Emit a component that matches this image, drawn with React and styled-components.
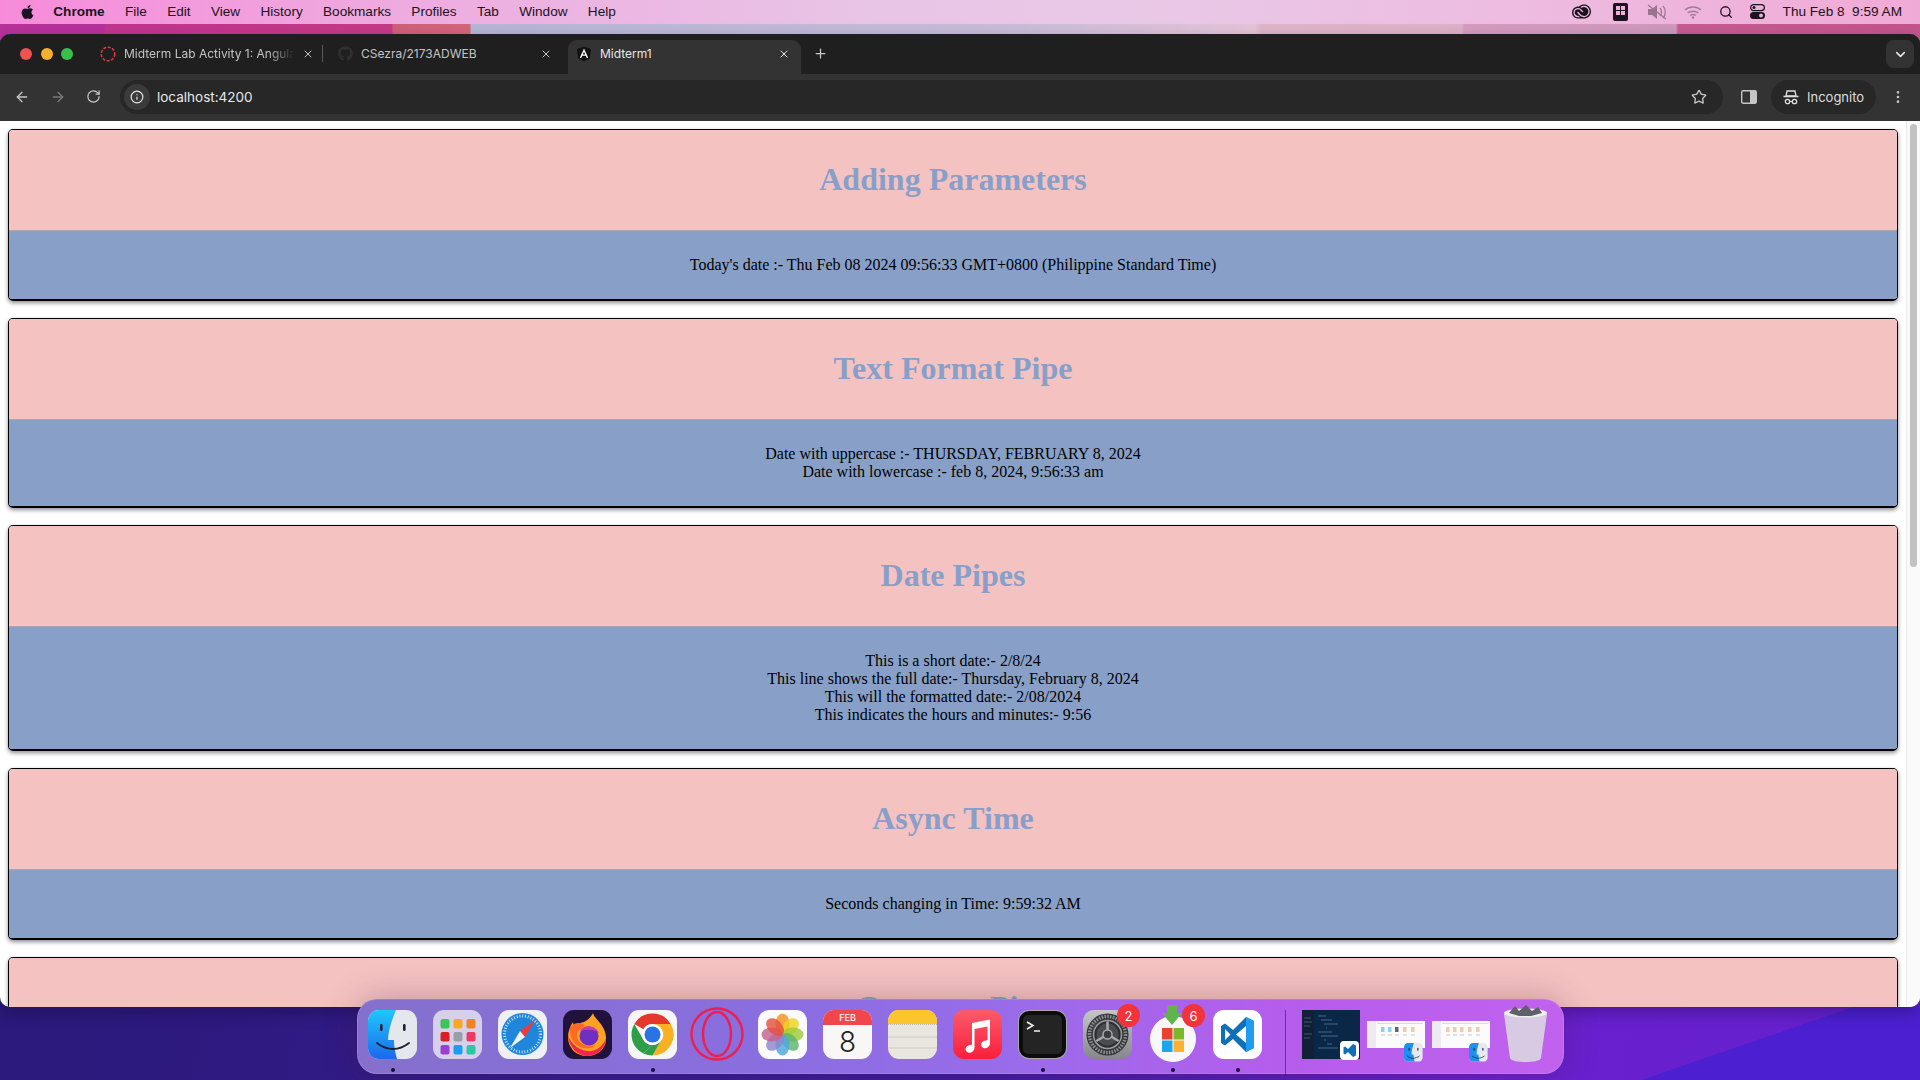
import React from 'react';
import styled, { createGlobalStyle } from 'styled-components';
import { ArrowLeft, ArrowRight, RotateCw, Info, Star, MoreVertical, X, Plus, ChevronDown, Search } from 'lucide-react';
import { FaApple, FaGithub } from 'react-icons/fa';
import { SiAdobecreativecloud } from 'react-icons/si';

const GlobalStyle = createGlobalStyle`
  html, body { margin: 0; padding: 0; height: 100%; overflow: hidden; }
  * { box-sizing: border-box; }
`;

const Desktop = styled.div`
  position: relative;
  width: 1920px;
  height: 1080px;
  overflow: hidden;
  display: flex;
  flex-direction: column;
  background:
    linear-gradient(90deg, #b8329c 0, #b8329c 104px, #c23590 105px, #c63a86 392px, #d0607a 393px, #d4667a 470px, #b6b6d6 471px, #c8bcd8 1000px, #e4c4d8 1255px, #dfb5c8 1262px, #deb2c8 1462px, #d59cbf 1464px, #cf98bd 1676px, #c65c92 1678px, #c4558c 100%) top / 100% 40px no-repeat,
    linear-gradient(161deg, transparent 52.8%, #4c20d0 53%) right bottom / 380px 73px no-repeat,
    linear-gradient(100deg, #2a1a78 0%, #2e1a80 20%, #3f1ca0 55%, #6a20d0 80%, #6420cc 100%);
`;

const MenuBar = styled.div`
  height: 24px;
  flex: none;
  display: flex;
  align-items: center;
  justify-content: space-between;
  padding: 0 18px 1px 20px;
  background: linear-gradient(90deg, #f78bd9 0%, #eeaadf 20%, #e8c4e6 45%, #e9c8e6 60%, #edbbdf 80%, #f0aad6 100%);
  font-family: "Liberation Sans", Arial, sans-serif;
  font-size: 13.6px;
  color: #1b1320;
`;

const MenuGroup = styled.div`
  display: flex;
  align-items: center;
  gap: 20.3px;
`;

const MenuItem = styled.span`
  font-weight: ${(p) => (p.$bold ? 700 : 400)};
`;

const AppleMark = styled(FaApple)`
  width: 15px;
  height: 16px;
  margin-right: -2px;
`;

const StatusGroup = styled.div`
  display: flex;
  align-items: center;
`;

const StatusSlot = styled.span`
  width: ${(p) => p.$w}px;
  height: 20px;
  flex: none;
  display: flex;
  align-items: center;
  justify-content: center;
  opacity: ${(p) => p.$dim || 1};
`;

const Clock = styled.span`
  margin-left: 2px;
  white-space: pre;
`;

const Window = styled.div`
  margin-top: 10px;
  height: 973px;
  flex: none;
  display: flex;
  flex-direction: column;
  border-radius: 10px;
  overflow: hidden;
  background: #1f1f1f;
  box-shadow: inset 0 1px 0 #6a6a6a, 0 6px 16px rgba(10, 0, 40, 0.3);
`;

const TabStrip = styled.div`
  height: 40px;
  flex: none;
  padding: 6px 6px 0 0;
  display: flex;
  align-items: stretch;
  background: #1f1f1f;
  font-family: Inter, "Liberation Sans", sans-serif;
  font-size: 12px;
`;

const Lights = styled.div`
  width: 92px;
  flex: none;
  display: flex;
  align-items: center;
  gap: 8.5px;
  padding: 0 0 6px 20px;
`;

const Light = styled.span`
  width: 12px;
  height: 12px;
  border-radius: 50%;
  background: ${(p) => p.$color};
`;

const Tab = styled.div`
  position: relative;
  width: 233px;
  margin-right: 5px;
  flex: none;
  display: flex;
  align-items: center;
  gap: 8px;
  padding: 0 11px 7px 8px;
  color: ${(p) => (p.$active ? '#e6e6e6' : '#c4c4c4')};
  background: ${(p) => (p.$active ? '#333333' : 'transparent')};
  border-radius: ${(p) => (p.$active ? '9px 9px 0 0' : '0')};
`;

const TabTitle = styled.span`
  flex: 1;
  white-space: nowrap;
  overflow: hidden;
  mask-image: ${(p) => (p.$fade ? 'linear-gradient(90deg, #000 85%, transparent)' : 'none')};
`;

const TabDivider = styled.span`
  position: absolute;
  right: 2px;
  top: 5px;
  height: 17px;
  width: 1px;
  background: #5a5a5a;
`;

const NewTab = styled(Plus)`
  width: 15px;
  height: 15px;
  color: #c8c8c8;
  margin: 6px 0 0 7px;
`;

const TabMenu = styled.div`
  margin-left: auto;
  width: 28px;
  height: 28px;
  border-radius: 8px;
  background: #333333;
  display: flex;
  align-items: center;
  justify-content: center;
  color: #e6e6e6;
`;

const Toolbar = styled.div`
  height: 47px;
  flex: none;
  display: flex;
  align-items: center;
  padding: 0 14px 1px 14px;
  background: #333333;
  color: #c6c6c6;
`;

const NavButton = styled.span`
  width: 16px;
  height: 16px;
  margin-right: 20px;
  display: flex;
  color: ${(p) => (p.$off ? '#7a7a7a' : '#c6c6c6')};
`;

const Omnibox = styled.div`
  width: 1603px;
  height: 34px;
  margin-left: -2px;
  border-radius: 17px;
  background: #272727;
  display: flex;
  align-items: center;
  padding: 0 16px 0 4px;
  font-family: Inter, "Liberation Sans", sans-serif;
  font-size: 13.5px;
  color: #e8e8e8;
`;

const InfoChip = styled.span`
  width: 26px;
  height: 26px;
  border-radius: 50%;
  background: #3b3b3b;
  display: flex;
  align-items: center;
  justify-content: center;
  margin-right: 7px;
`;

const Address = styled.span`
  flex: 1;
`;

const PanelIcon = styled.svg`
  width: 16px;
  height: 16px;
  margin-left: 18px;
  flex: none;
`;

const Incognito = styled.div`
  width: 105px;
  height: 34px;
  margin-left: 14px;
  flex: none;
  border-radius: 17px;
  background: #272727;
  display: flex;
  align-items: center;
  gap: 8px;
  padding-left: 12px;
  font-family: Inter, "Liberation Sans", sans-serif;
  font-size: 13px;
  color: #dedede;
`;

const MoreButton = styled.span`
  display: flex;
  margin-left: 14px;
`;

const PageFrame = styled.div`
  flex: 1;
  min-height: 0;
  display: flex;
  background: #ffffff;
`;

const Page = styled.div`
  flex: 1;
  min-width: 0;
  padding: 8px 8px 0;
  overflow: hidden;
`;

const ScrollTrack = styled.div`
  width: 14px;
  flex: none;
  padding: 3px 3px 0 3px;
  background: #fafafa;
  border-left: 1px solid #ececec;
`;

const ScrollThumb = styled.div`
  height: 443px;
  border-radius: 4px;
  background: #c2c2c2;
`;

const Card = styled.section`
  margin-bottom: 17px;
  border: 1px solid #000;
  border-bottom-width: 2px;
  border-radius: 5px;
  overflow: hidden;
  box-shadow: 0 2px 4px rgba(0, 0, 0, 0.45);
  font-family: "Liberation Serif", "Times New Roman", serif;
`;

const CardHead = styled.header`
  height: 101px;
  padding-bottom: 2px;
  display: flex;
  align-items: center;
  justify-content: center;
  background: #f5c2c2;
  border-bottom: 1px solid #a9a9ad;
`;

const CardTitle = styled.h1`
  margin: 0;
  font-size: 32px;
  font-weight: 700;
  color: #88a0c9;
`;

const CardBody = styled.div`
  padding: 25px 10px 25px;
  background: #88a0c8;
  color: #000;
  font-size: 16px;
  line-height: 18px;
  text-align: center;
`;

const Dock = styled.div`
  position: absolute;
  left: 357px;
  top: 999px;
  width: 1207px;
  height: 75px;
  padding: 11px 0 0 11px;
  display: flex;
  align-items: flex-start;
  gap: 16px;
  border-radius: 20px;
  background: linear-gradient(90deg, #8470cc 0%, #8a6ee0 35%, #9a6bea 55%, #b65cec 78%, #c062ee 100%);
  box-shadow: 0 0 34px rgba(60, 20, 40, 0.28), inset 0 0 0 1px rgba(255, 255, 255, 0.12);
`;

const DockItem = styled.div`
  position: relative;
  width: ${(p) => p.$w || 49}px;
  height: 49px;
  flex: none;
`;

const Drawing = styled.svg`
  display: block;
  width: ${(p) => p.$w || 49}px;
  height: 49px;
  overflow: visible;
`;

const RunDot = styled.span`
  position: absolute;
  left: 22.5px;
  top: 58px;
  width: 4px;
  height: 4px;
  border-radius: 50%;
  background: #14103c;
`;

const Badge = styled.span`
  position: absolute;
  right: -8px;
  top: -6px;
  width: 23px;
  height: 23px;
  border-radius: 50%;
  background: #f2333b;
  color: #fff;
  display: flex;
  align-items: center;
  justify-content: center;
  font-family: Inter, "Liberation Sans", sans-serif;
  font-size: 13px;
  z-index: 1;
`;

const DockDivider = styled.span`
  width: 1px;
  height: 66px;
  flex: none;
  margin-left: 7px;
  background: rgba(40, 20, 70, 0.55);
`;

const DocGroup = styled.div`
  display: flex;
  gap: 7px;
`;

const TrashItem = styled(DockItem)`
  margin-left: 4px;
`;

const cards = [
  { title: 'Adding Parameters', lines: ["Today's date :- Thu Feb 08 2024 09:56:33 GMT+0800 (Philippine Standard Time)"] },
  { title: 'Text Format Pipe', lines: ['Date with uppercase :- THURSDAY, FEBRUARY 8, 2024', 'Date with lowercase :- feb 8, 2024, 9:56:33 am'] },
  {
    title: 'Date Pipes',
    lines: [
      'This is a short date:- 2/8/24',
      'This line shows the full date:- Thursday, February 8, 2024',
      'This will the formatted date:- 2/08/2024',
      'This indicates the hours and minutes:- 9:56'
    ]
  },
  { title: 'Async Time', lines: ['Seconds changing in Time: 9:59:32 AM'] },
  { title: 'Common Pipe', lines: ['Common pipes'] }
];

const menus = ['File', 'Edit', 'View', 'History', 'Bookmarks', 'Profiles', 'Tab', 'Window', 'Help'];

const MiniFinder = ({ x, y, s }) => (
  <g transform={`translate(${x} ${y}) scale(${s})`}>
    <rect width="49" height="49" rx="11" fill="#e6eaee" />
    <path d="M11 0H26C22 12 20 22 20 30H25C25 36 26 43 28 49H11A11 11 0 0 1 0 38V11A11 11 0 0 1 11 0Z" fill="#1f8ff0" />
    <path d="M8 34C18 42 30 42 41 34" fill="none" stroke="#1b2a40" strokeWidth="2" />
    <rect x="12" y="13" width="3" height="7" fill="#1b2a40" />
    <rect x="35" y="13" width="3" height="7" fill="#1b2a40" />
  </g>
);

const FinderWindow = ({ dark }) => (
  <Drawing $w={58} viewBox="0 0 58 49">
    <rect x="0" y="11" width="58" height="27" fill="#fbfbfb" />
    <rect x="0" y="11" width="9" height="27" fill="#efe9f0" />
    <path d="M10 13.500H56" stroke="#dcdcdc" strokeWidth="1" />
    {[14, 21, 28, 36, 44].map((x, i) => (
      <rect key={x} x={x} y="17" width="3.500" height="5" opacity="0.85" fill={dark && i < 2 ? '#7cc6f0' : dark && i === 2 ? '#4a4a4a' : '#e9c4a4'} />
    ))}
    <path d="M14 25H18M21 25H25M28 25H32M36 25H40M44 25H48" stroke="#c8c8c8" strokeWidth="1" />
    <MiniFinder x={37} y={33} s={0.38} />
  </Drawing>
);

const dockApps = [
  {
    key: 'finder',
    dot: true,
    art: (
      <>
        <defs>
          <linearGradient id="fb" x1="0" y1="0" x2="0" y2="1">
            <stop offset="0" stopColor="#1ec8fb" />
            <stop offset="1" stopColor="#1c68ec" />
          </linearGradient>
        </defs>
        <rect width="49" height="49" rx="11" fill="#e4e7ec" />
        <path d="M11 0H28C23 12 20 22 20 30H26C26 36 27 43 29 49H11A11 11 0 0 1 0 38V11A11 11 0 0 1 11 0Z" fill="url(#fb)" />
        <path d="M9 33C19 41 31 41 41 33" fill="none" stroke="#182338" strokeWidth="1.800" strokeLinecap="round" />
        <rect x="12" y="14" width="2.600" height="7" rx="1.200" fill="#182338" />
        <rect x="35" y="14" width="2.600" height="7" rx="1.200" fill="#182338" />
      </>
    )
  },
  {
    key: 'launchpad',
    art: (
      <>
        <rect width="49" height="49" rx="11" fill="#d6d0ea" />
        {['#37c75a', '#f7a823', '#f08325', '#d81f26', '#9a9da4', '#ee3763', '#9a3fd0', '#1f9cf0', '#2ac9a6'].map((c, i) => (
          <rect key={c} x={7.5 + (i % 3) * 13} y={9 + Math.floor(i / 3) * 13} width="9" height="9.500" rx="2" fill={c} />
        ))}
      </>
    )
  },
  {
    key: 'safari',
    art: (
      <>
        <rect width="49" height="49" rx="11" fill="#eef0f2" />
        <circle cx="24.500" cy="24" r="21" fill="#1f86dc" />
        <circle cx="24.500" cy="24" r="18" fill="none" stroke="#d8ecfa" strokeWidth="3" strokeDasharray="0.900 1.900" />
        <path d="M37 10L27 27L22 21Z" fill="#f0393b" />
        <path d="M12 38L22 21L27 27Z" fill="#f2f2f2" />
      </>
    )
  },
  {
    key: 'firefox',
    art: (
      <>
        <rect width="49" height="49" rx="11" fill="#20123a" />
        <path d="M30 3C31 9 42 14 43 27C44 38 35 46 24 46C13 46 5 38 5 27C5 22 7 16 10 12C10 15 11 17 13 18C15 14 18 12 21 12C25 10 28 7 30 3Z" fill="#ffa21f" />
        <path d="M5 25C6 38 15 46 25 46C35 46 43 37 43 28C40 37 32 42 24 41C15 40 8 34 5 25Z" fill="#f3244f" />
        <path d="M7 18C10 13 15 12 20 14C25 16 15 19 14 24C13 33 24 39 33 34C26 43 6 38 7 18Z" fill="#ff6a22" />
        <circle cx="26" cy="26" r="9.500" fill="#6f2fc0" />
        <path d="M17 21C20 15 31 14 36 23C31 19 24 19 17 21Z" fill="#c23fb0" />
      </>
    )
  },
  {
    key: 'chrome',
    dot: true,
    art: (
      <>
        <rect width="49" height="49" rx="11" fill="#f6f6f6" />
        <path d="M24.500 3.500A21 21 0 0 1 42.700 14H24.500A10.500 10.500 0 0 0 15.400 19.200L6.300 13.900A21 21 0 0 1 24.500 3.500Z" fill="#e5372b" />
        <path d="M6.300 13.900L15.400 29.800A10.500 10.500 0 0 0 24.500 35L15.400 43.400A21 21 0 0 1 6.300 13.900Z" fill="#2f9e46" />
        <path d="M42.700 14A21 21 0 0 1 24.500 45.500L33.600 29.800A10.500 10.500 0 0 0 33.600 19.200L24.500 14Z" fill="#f9b122" />
        <path d="M15.400 43.400L24.500 35A10.500 10.500 0 0 0 33.600 29.800L24.500 45.500A21 21 0 0 1 15.400 43.400Z" fill="#2f9e46" />
        <circle cx="24.500" cy="24.500" r="10.500" fill="#ffffff" />
        <circle cx="24.500" cy="24.500" r="8" fill="#2a73e6" />
      </>
    )
  },
  {
    key: 'opera',
    art: (
      <>
        <circle cx="24" cy="24" r="25.500" fill="none" stroke="#ef1e4e" strokeWidth="2.400" />
        <ellipse cx="24" cy="24" rx="14" ry="22" fill="none" stroke="#ef1e4e" strokeWidth="2.400" />
      </>
    )
  },
  {
    key: 'photos',
    art: (
      <>
        <rect width="49" height="49" rx="11" fill="#fbfbfb" />
        {['#f6911e', '#ecd21f', '#9ccb3b', '#5db56b', '#4fa6dc', '#8e86cc', '#c3628f', '#e5503f'].map((c, i) => (
          <ellipse key={c} cx="24.500" cy="14" rx="7" ry="10.500" fill={c} opacity="0.820" transform={`rotate(${i * 45} 24.500 24.500)`} />
        ))}
      </>
    )
  },
  {
    key: 'calendar',
    art: (
      <>
        <rect width="49" height="49" rx="11" fill="#f8f7f5" />
        <path d="M11 0H38A11 11 0 0 1 49 11V15H0V11A11 11 0 0 1 11 0Z" fill="#f0474a" />
        <text x="24.500" y="11" textAnchor="middle" fontFamily="Inter, sans-serif" fontSize="9" fontWeight="600" fill="#fbe6e6">FEB</text>
        <text x="24.500" y="42" textAnchor="middle" fontFamily="Inter, sans-serif" fontSize="28" fontWeight="300" fill="#222">8</text>
      </>
    )
  },
  {
    key: 'notes',
    art: (
      <>
        <rect width="49" height="49" rx="11" fill="#e9e6df" />
        <path d="M11 0H38A11 11 0 0 1 49 11V14H0V11A11 11 0 0 1 11 0Z" fill="#fbc52c" />
        <path d="M0 14.500H49" stroke="#b9b5ab" strokeDasharray="1 1" />
        <path d="M0 27H49M0 38H49" stroke="#cfccc4" />
      </>
    )
  },
  {
    key: 'music',
    art: (
      <>
        <defs>
          <linearGradient id="mu" x1="0" y1="0" x2="0" y2="1">
            <stop offset="0" stopColor="#fb5b6c" />
            <stop offset="1" stopColor="#f91f3c" />
          </linearGradient>
        </defs>
        <rect width="49" height="49" rx="11" fill="url(#mu)" />
        <path d="M19 13L37 9.500V33C37 37 33 39 30.500 38C27 36.500 27.500 32 31 31L34.500 30V16.500L21.500 19V37.500C21.500 41.500 17.500 43.500 15 42.500C11.500 41 12 36.500 15.500 35.500L19 34.500Z" fill="#fff" />
      </>
    )
  },
  {
    key: 'terminal',
    dot: true,
    art: (
      <>
        <rect width="49" height="49" rx="11" fill="#a8a8a8" />
        <rect x="1" y="1" width="47" height="47" rx="10" fill="#0c0c0c" />
        <rect x="5" y="5" width="39" height="39" rx="5" fill="#242424" />
        <path d="M9 12L15 15.500L9 19" fill="none" stroke="#f2f2f2" strokeWidth="1.500" />
        <path d="M16 21H22" stroke="#f2f2f2" strokeWidth="1.500" />
      </>
    )
  },
  {
    key: 'settings',
    badge: '2',
    art: (
      <>
        <defs>
          <linearGradient id="se" x1="0" y1="0" x2="0" y2="1">
            <stop offset="0" stopColor="#c4c6c9" />
            <stop offset="1" stopColor="#85878b" />
          </linearGradient>
        </defs>
        <rect width="49" height="49" rx="11" fill="url(#se)" />
        <circle cx="24.500" cy="24.500" r="21" fill="#36373a" />
        <circle cx="24.500" cy="24.500" r="18" fill="none" stroke="#8f9195" strokeWidth="3.500" strokeDasharray="1.500 1.300" />
        <circle cx="24.500" cy="24.500" r="14" fill="#2e2f32" stroke="#9a9ca0" strokeWidth="1.500" />
        <circle cx="24.500" cy="24.500" r="11" fill="#4b4c50" />
        <path d="M24.500 24.500V11.500M24.500 24.500L13.300 31M24.500 24.500L35.700 31" stroke="#a6a8ac" strokeWidth="2.600" />
        <circle cx="24.500" cy="24.500" r="4.500" fill="#3a3b3e" stroke="#a6a8ac" strokeWidth="1.500" />
      </>
    )
  },
  {
    key: 'store',
    dot: true,
    badge: '6',
    art: (
      <>
        <circle cx="25" cy="29" r="23" fill="#f8f8f8" />
        <rect x="14" y="18" width="10.500" height="11.500" fill="#e8432c" />
        <rect x="25.500" y="18" width="10.500" height="11.500" fill="#7cb82a" />
        <rect x="14" y="30.500" width="10.500" height="11.500" fill="#1da5ec" />
        <rect x="25.500" y="30.500" width="10.500" height="11.500" fill="#fbb030" />
        <path d="M19 -5H29V3H34L24 15L14 3H19Z" fill="#5fb548" />
      </>
    )
  },
  {
    key: 'vscode',
    dot: true,
    art: (
      <>
        <rect width="49" height="49" rx="11" fill="#ffffff" />
        <path d="M33 7L41 11V38L33 42L20 29L12 35.500L8 33V16L12 13.500L20 20Z" fill="#0f70b8" />
        <path d="M33 7L41 11V38L33 42Z" fill="#1f9cf0" />
        <path d="M33 16L23 24.500L33 33Z" fill="#ffffff" />
        <path d="M12 19L17.500 24.500L12 30Z" fill="#ffffff" />
      </>
    )
  }
];

const App = () => (
  <>
    <GlobalStyle />
    <Desktop>
      <MenuBar>
        <MenuGroup>
          <AppleMark />
          <MenuItem $bold>Chrome</MenuItem>
          {menus.map((m) => <MenuItem key={m}>{m}</MenuItem>)}
        </MenuGroup>
        <StatusGroup>
          <StatusSlot $w={30}><SiAdobecreativecloud size={19} /></StatusSlot>
          <StatusSlot $w={48}>
            <svg width="15" height="18" viewBox="0 0 15 18">
              <rect width="15" height="18" rx="2" fill="#1b1320" />
              <rect x="3" y="3" width="4" height="4" fill="#f0b0d8" />
              <rect x="8" y="3" width="4" height="4" fill="#f0b0d8" />
              <rect x="3" y="8" width="4" height="4" fill="#f0b0d8" />
              <rect x="8" y="8" width="4" height="4" fill="#f0b0d8" />
            </svg>
          </StatusSlot>
          <StatusSlot $w={24} $dim={0.4}>
            <svg width="20" height="16" viewBox="0 0 20 16">
              <path d="M1 5H5L10 1V15L5 11H1Z" fill="#1b1320" />
              <path d="M13 4C15 6 15 10 13 12M16 2C19 5 19 11 16 14" fill="none" stroke="#1b1320" strokeWidth="1.200" />
              <path d="M1 1L19 15" stroke="#1b1320" strokeWidth="1.200" />
            </svg>
          </StatusSlot>
          <StatusSlot $w={48} $dim={0.35}>
            <svg width="18" height="14" viewBox="0 0 18 14">
              <path d="M1 5C5.500 1 12.500 1 17 5M3.500 8C6.500 5.500 11.500 5.500 14.500 8M6 10.500C7.800 9.300 10.200 9.300 12 10.500" fill="none" stroke="#1b1320" strokeWidth="1.500" />
              <circle cx="9" cy="12.500" r="1.300" fill="#1b1320" />
            </svg>
          </StatusSlot>
          <StatusSlot $w={18}><Search size={14} strokeWidth={2.200} /></StatusSlot>
          <StatusSlot $w={46}>
            <svg width="15" height="15" viewBox="0 0 15 15">
              <rect x="0.600" y="0.600" width="13.800" height="6" rx="3" fill="none" stroke="#1b1320" strokeWidth="1.200" />
              <circle cx="4" cy="3.600" r="1.500" fill="#1b1320" />
              <rect y="8" width="15" height="7" rx="3.500" fill="#1b1320" />
              <circle cx="11" cy="11.500" r="2" fill="#f0b0d8" />
            </svg>
          </StatusSlot>
          <Clock>Thu Feb 8  9:59 AM</Clock>
        </StatusGroup>
      </MenuBar>

      <Window>
        <TabStrip>
          <Lights>
            <Light $color="#f0524f" />
            <Light $color="#f6b02d" />
            <Light $color="#38c149" />
          </Lights>
          <Tab>
            <svg width="16" height="16" viewBox="0 0 16 16">
              <circle cx="8" cy="8" r="6.800" fill="none" stroke="#e8383b" strokeWidth="1.500" strokeDasharray="3 1.500" />
            </svg>
            <TabTitle $fade>Midterm Lab Activity 1: Angular</TabTitle>
            <X size={12} />
            <TabDivider />
          </Tab>
          <Tab>
            <FaGithub size={15} color="#303030" />
            <TabTitle>CSezra/2173ADWEB</TabTitle>
            <X size={12} />
          </Tab>
          <Tab $active>
            <svg width="16" height="16" viewBox="0 0 16 16">
              <path d="M8 0.500L1 3L2.100 12.300L8 15.500L13.900 12.300L15 3Z" fill="#111" />
              <path d="M8 2.500L3.700 12H5.300L6.200 9.800H9.800L10.700 12H12.300ZM8 5.700L9.200 8.500H6.800Z" fill="#fff" />
            </svg>
            <TabTitle>Midterm1</TabTitle>
            <X size={12} />
          </Tab>
          <NewTab />
          <TabMenu><ChevronDown size={15} strokeWidth={2.500} /></TabMenu>
        </TabStrip>

        <Toolbar>
          <NavButton><ArrowLeft size={16} /></NavButton>
          <NavButton $off><ArrowRight size={16} /></NavButton>
          <NavButton><RotateCw size={15} /></NavButton>
          <Omnibox>
            <InfoChip><Info size={14} /></InfoChip>
            <Address>localhost:4200</Address>
            <Star size={16} color="#c6c6c6" />
          </Omnibox>
          <PanelIcon viewBox="0 0 16 16">
            <rect x="0.700" y="1.700" width="14.600" height="12.600" rx="1.500" fill="none" stroke="#c6c6c6" strokeWidth="1.400" />
            <rect x="9" y="2" width="6" height="12" fill="#c6c6c6" />
          </PanelIcon>
          <Incognito>
            <svg width="16" height="15" viewBox="0 0 16 15">
              <path d="M4 1H12L13 6H3Z" fill="none" stroke="#dedede" strokeWidth="1.300" />
              <path d="M0.500 6.500H15.500" stroke="#dedede" strokeWidth="1.400" />
              <circle cx="4.500" cy="11.500" r="2.200" fill="none" stroke="#dedede" strokeWidth="1.300" />
              <circle cx="11.500" cy="11.500" r="2.200" fill="none" stroke="#dedede" strokeWidth="1.300" />
              <path d="M6.700 11.500H9.300" stroke="#dedede" strokeWidth="1.200" />
            </svg>
            Incognito
          </Incognito>
          <MoreButton><MoreVertical size={16} /></MoreButton>
        </Toolbar>

        <PageFrame>
          <Page>
            {cards.map((card) => (
              <Card key={card.title}>
                <CardHead><CardTitle>{card.title}</CardTitle></CardHead>
                <CardBody>
                  {card.lines.map((line) => <div key={line}>{line}</div>)}
                </CardBody>
              </Card>
            ))}
          </Page>
          <ScrollTrack><ScrollThumb /></ScrollTrack>
        </PageFrame>
      </Window>

      <Dock>
        {dockApps.map((app) => (
          <DockItem key={app.key}>
            <Drawing viewBox="0 0 49 49">{app.art}</Drawing>
            {app.badge && <Badge>{app.badge}</Badge>}
            {app.dot && <RunDot />}
          </DockItem>
        ))}
        <DockDivider />
        <DocGroup>
          <DockItem $w={58}>
            <Drawing $w={58} viewBox="0 0 58 49">
              <rect width="58" height="49" fill="#0b2748" />
              <rect width="12" height="49" fill="#112036" />
              {[6, 10, 14, 18, 22, 26, 30, 34, 38].map((y, i) => (
                <path key={y} d={`M${16 + (i % 4) * 3} ${y}H${24 + (i % 3) * 6}`} stroke="#4f789f" strokeWidth="0.800" />
              ))}
              <path d="M2 8H9M2 12H10M2 16H8M2 24H10M2 28H8" stroke="#48627c" strokeWidth="0.800" />
              <rect x="38" y="31" width="19" height="19" rx="4" fill="#fff" />
              <path d="M51 34L54 35.500V45.500L51 47L46 42L43 44.500L41.500 43.500V37.500L43 36.500L46 39Z" fill="#0f70b8" />
            </Drawing>
          </DockItem>
          <DockItem $w={58}><FinderWindow dark /></DockItem>
          <DockItem $w={58}><FinderWindow /></DockItem>
          <TrashItem>
            <Drawing viewBox="0 0 49 49">
              <path d="M3 4L9 48C10 51 17 52 24.500 52C32 52 39 51 40 48L46 4Z" fill="#dcdde0" opacity="0.850" />
              <ellipse cx="24.500" cy="3" rx="21.500" ry="4.500" fill="#efefef" />
              <path d="M8 3L14 -4L18 1L25 -5L31 1L37 -3L41 3L30 6H18Z" fill="#5e6268" />
            </Drawing>
          </TrashItem>
        </DocGroup>
      </Dock>
    </Desktop>
  </>
);

export default App;
